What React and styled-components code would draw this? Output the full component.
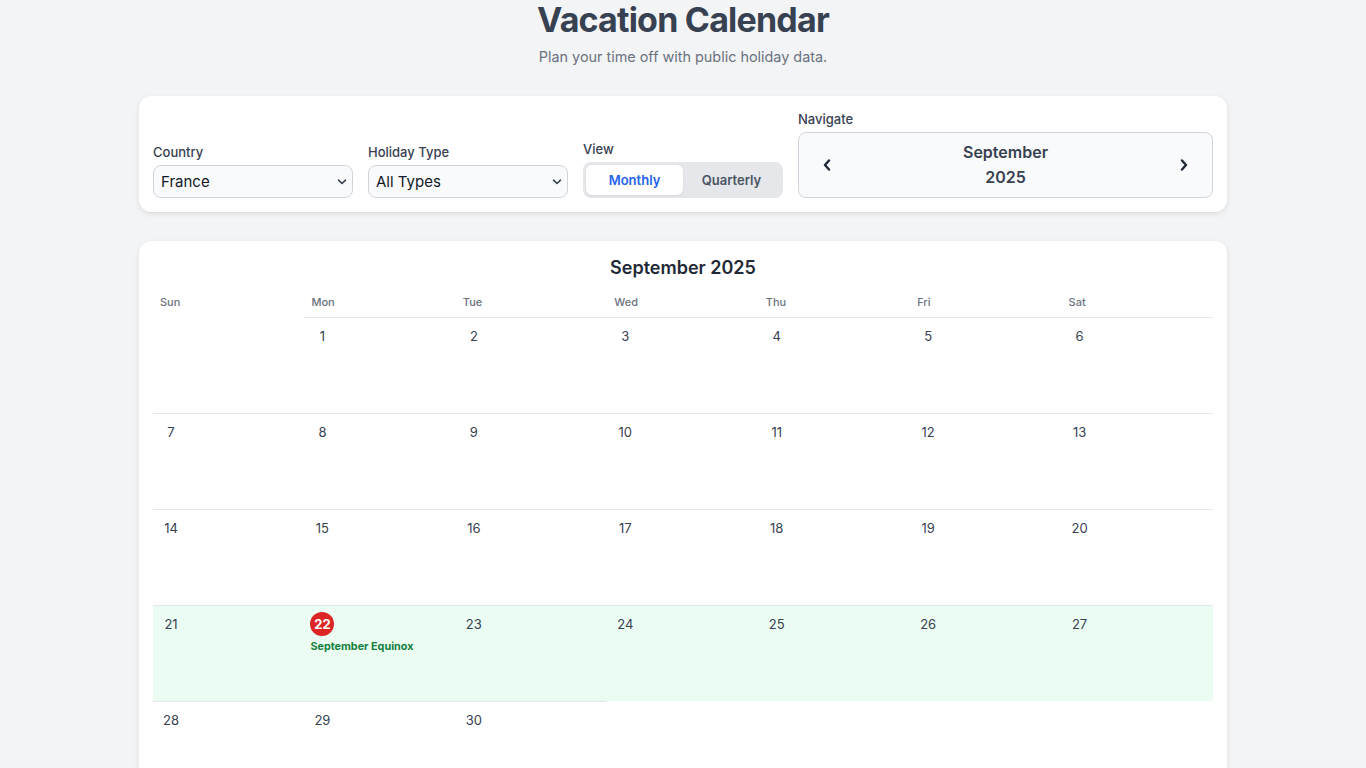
import React, { useLayoutEffect } from "react";
import styled, { createGlobalStyle } from "styled-components";

const Global = createGlobalStyle`
  html { scroll-behavior: auto; }
  body {
    margin: 8px;
    background: #f3f4f6;
    font-family: Inter, "Noto Sans", sans-serif;
    color: #374151;
  }
  * { box-sizing: border-box; }
`;

const Page = styled.div`
  padding: 32px;
`;

const Container = styled.div`
  max-width: 1088px;
  margin: 0 auto;
  display: flex;
  flex-direction: column;
`;

const Header = styled.header`
  text-align: center;
  margin-bottom: 28px;
`;

const Title = styled.h1`
  margin: 0;
  font-size: 34px;
  line-height: 40px;
  font-weight: 700;
  letter-spacing: -0.8px;
  color: #374151;
`;

const Subtitle = styled.p`
  margin: 6px 0 0;
  font-size: 14.4px;
  line-height: 22px;
  color: #6b7280;
`;

const Card = styled.section`
  background: #fff;
  border-radius: 12px;
  padding: 14px;
  box-shadow: 0 2px 6px rgba(0, 0, 0, 0.08), 0 1px 2px rgba(0, 0, 0, 0.04);
  margin-bottom: ${(p) => p.$gap || 0}px;
`;

const Controls = styled.div`
  display: flex;
  align-items: flex-end;
  gap: 15px;
`;

const Field = styled.div`
  display: flex;
  flex-direction: column;
  width: ${(p) => (p.$grow ? "auto" : "200px")};
  flex: ${(p) => (p.$grow ? "1" : "none")};
`;

const Label = styled.label`
  font-size: 13px;
  line-height: 18px;
  font-weight: 500;
  color: #374151;
  margin-bottom: 4px;
`;

const SelectWrap = styled.div`
  position: relative;
  height: 33px;
`;

const Select = styled.select`
  appearance: none;
  -webkit-appearance: none;
  height: 33px;
  width: 100%;
  border: 1px solid #d1d5db;
  border-radius: 8px;
  background: #f9fafb;
  font-family: Inter, sans-serif;
  font-size: 15px;
  color: #111827;
  padding: 0 24px 0 7px;
`;

const SelectIcon = styled.svg`
  position: absolute;
  right: 6px;
  top: 14px;
  pointer-events: none;
  color: #374151;
`;

const Toggle = styled.div`
  display: grid;
  grid-template-columns: 1fr 1fr;
  height: 36px;
  padding: 3px;
  border-radius: 8px;
  background: #e5e7eb;
`;

const ToggleBtn = styled.button`
  border: none;
  border-radius: 6px;
  font-family: Inter, sans-serif;
  font-size: 13px;
  font-weight: 600;
  cursor: pointer;
  background: ${(p) => (p.$active ? "#ffffff" : "transparent")};
  color: ${(p) => (p.$active ? "#2563eb" : "#4b5563")};
  box-shadow: ${(p) => (p.$active ? "0 1px 2px rgba(0,0,0,0.08)" : "none")};
`;

const Navigator = styled.div`
  height: 66px;
  display: flex;
  align-items: center;
  justify-content: space-between;
  padding: 0 12px;
  border: 1px solid #d1d5db;
  border-radius: 8px;
  background: #f9fafb;
`;

const ArrowBtn = styled.button`
  border: none;
  background: transparent;
  padding: 8px 12px;
  display: flex;
  align-items: center;
  cursor: pointer;
  color: #1f2937;
`;

const NavText = styled.div`
  text-align: center;
  font-size: 16px;
  line-height: 25px;
  font-weight: 600;
  color: #374151;
`;

const MonthTitle = styled.h2`
  margin: 0 0 8px;
  text-align: center;
  font-size: 18px;
  line-height: 26px;
  font-weight: 600;
  color: #1f2937;
`;

const Grid = styled.div`
  display: grid;
  grid-template-columns: repeat(7, 1fr);
`;

const DayHead = styled.div`
  padding: 5px 8px 7px 7px;
  font-size: 11px;
  line-height: 16px;
  font-weight: 500;
  color: #6b7280;
`;

const Cell = styled.div`
  height: 96px;
  padding: 6px;
  border-top: ${(p) => (p.$empty ? "none" : "1px solid #e5e7eb")};
  background: ${(p) => (p.$highlight ? "#ebfcf3" : "transparent")};
`;

const DayNum = styled.div`
  width: 24px;
  height: 24px;
  border-radius: 50%;
  display: flex;
  align-items: center;
  justify-content: center;
  font-size: 13px;
  font-weight: ${(p) => (p.$holiday ? 700 : 400)};
  color: ${(p) => (p.$holiday ? "#ffffff" : "#374151")};
  background: ${(p) => (p.$holiday ? "#dc2626" : "transparent")};
`;

const HolidayName = styled.div`
  margin-top: 4px;
  font-size: 10.8px;
  line-height: 14px;
  font-weight: 700;
  color: #15803d;
  white-space: nowrap;
`;

const Chevron = ({ dir }) => (
  <svg width="8" height="12" viewBox="0 0 8 12" fill="none">
    <path
      d={dir === "left" ? "M6 1.5 L2 6 L6 10.5" : "M2 1.5 L6 6 L2 10.5"}
      stroke="currentColor"
      strokeWidth="2.4"
      strokeLinecap="round"
      strokeLinejoin="round"
    />
  </svg>
);

const DropSelect = ({ value, options }) => (
  <SelectWrap>
    <Select defaultValue={value}>
      {options.map((o) => (
        <option key={o.value} value={o.value}>
          {o.label}
        </option>
      ))}
    </Select>
    <SelectIcon width="10" height="6" viewBox="0 0 10 6" fill="none">
      <path
        d="M1.5 1.2 L5 4.5 L8.5 1.2"
        stroke="currentColor"
        strokeWidth="1.6"
        strokeLinecap="round"
        strokeLinejoin="round"
      />
    </SelectIcon>
  </SelectWrap>
);

const weekdays = ["Sun", "Mon", "Tue", "Wed", "Thu", "Fri", "Sat"];
const holidays = { 22: "September Equinox" };

export default function App() {
  useLayoutEffect(() => {
    window.scrollTo(0, 40);
  }, []);

  const cells = [];
  const lead = 1;
  for (let i = 0; i < lead; i++) cells.push({ empty: true, key: `e${i}` });
  for (let d = 1; d <= 30; d++) cells.push({ day: d, key: `d${d}` });

  const highlightWeek = (idx) => Math.floor(idx / 7) === 3;

  return (
    <Page>
      <Global />
      <Container>
        <Header>
          <Title>Vacation Calendar</Title>
          <Subtitle>Plan your time off with public holiday data.</Subtitle>
        </Header>

        <Card $gap={29}>
          <Controls>
            <Field>
              <Label>Country</Label>
              <DropSelect
                value="FR"
                options={[
                  { value: "FR", label: "France" },
                  { value: "US", label: "United States" },
                ]}
              />
            </Field>
            <Field>
              <Label>Holiday Type</Label>
              <DropSelect
                value="all"
                options={[
                  { value: "all", label: "All Types" },
                  { value: "public", label: "Public" },
                ]}
              />
            </Field>
            <Field>
              <Label>View</Label>
              <Toggle>
                <ToggleBtn $active>Monthly</ToggleBtn>
                <ToggleBtn>Quarterly</ToggleBtn>
              </Toggle>
            </Field>
            <Field $grow>
              <Label>Navigate</Label>
              <Navigator>
                <ArrowBtn aria-label="Previous">
                  <Chevron dir="left" />
                </ArrowBtn>
                <NavText>
                  September
                  <br />
                  2025
                </NavText>
                <ArrowBtn aria-label="Next">
                  <Chevron dir="right" />
                </ArrowBtn>
              </Navigator>
            </Field>
          </Controls>
        </Card>

        <Card>
          <MonthTitle>September 2025</MonthTitle>
          <Grid>
            {weekdays.map((w) => (
              <DayHead key={w}>{w}</DayHead>
            ))}
            {cells.map((c, idx) =>
              c.empty ? (
                <Cell key={c.key} $empty />
              ) : (
                <Cell key={c.key} $highlight={highlightWeek(idx)}>
                  <DayNum $holiday={!!holidays[c.day]}>{c.day}</DayNum>
                  {holidays[c.day] && <HolidayName>{holidays[c.day]}</HolidayName>}
                </Cell>
              )
            )}
          </Grid>
        </Card>
      </Container>
    </Page>
  );
}
